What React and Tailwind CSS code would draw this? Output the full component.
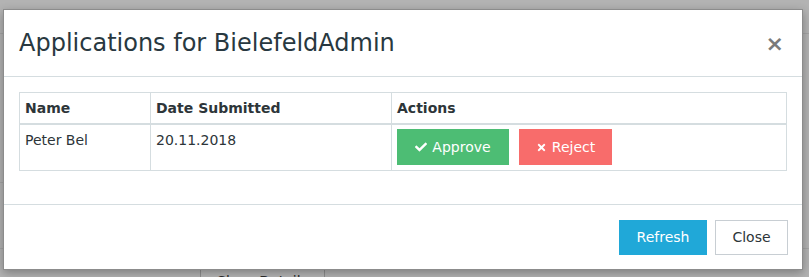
import { FaCheck, FaTimes } from 'react-icons/fa';

const apps = [{ name: 'Peter Bel', date: '20.11.2018' }];

export default function App() {
  return (
    <div className="relative w-[809px] h-[277px] overflow-hidden bg-[#b3b3b3] font-['DejaVu_Sans',sans-serif]">
      {/* page behind the backdrop */}
      <div className="absolute left-0 top-[33px] w-full h-px bg-[#a4a4a4]" />
      <div className="absolute left-0 top-[182px] w-[3px] h-px bg-[#a4a4a4]" />
      <div className="absolute left-0 top-[248px] w-full h-px bg-[#a4a4a4]" />
      <div className="absolute left-[200px] top-[268px] w-[125px] h-[30px] border border-[#8f8f8f] bg-[#b6b6b6] text-[14px] leading-[20px] text-[#2a2a2a] text-center pt-[2px]">
        Show Details
      </div>

      {/* modal */}
      <div className="absolute left-[3px] top-[9px] w-[800px] bg-white border border-[#8c8c8c] shadow-[0_3px_9px_rgba(0,0,0,0.3)]">
        <div className="flex items-center justify-between px-[15px] py-[15px] border-b border-[#d5dde0]">
          <h4 className="text-[24px] leading-[36px] text-[#283840]">Applications for BielefeldAdmin</h4>
          <button className="text-[22px] leading-[20px] font-bold text-[#7a7a7a] mr-[3px] mt-[2px]">×</button>
        </div>

        <div className="px-[15px] pt-[15px] pb-[15px]">
          <table className="w-full border-collapse border border-[#d5dde0] mb-[18px] text-[14px] leading-[20px] text-[#2d3539]">
            <thead>
              <tr>
                <th className="w-[131px] text-left font-bold px-[5px] py-[5px] border border-[#d5dde0] border-b-2">Name</th>
                <th className="w-[241px] text-left font-bold px-[5px] py-[5px] border border-[#d5dde0] border-b-2">Date Submitted</th>
                <th className="text-left font-bold px-[5px] py-[5px] border border-[#d5dde0] border-b-2">Actions</th>
              </tr>
            </thead>
            <tbody>
              {apps.map((a) => (
                <tr key={a.name}>
                  <td className="align-top px-[5px] py-[5px] border border-[#d5dde0]">{a.name}</td>
                  <td className="align-top px-[5px] py-[5px] border border-[#d5dde0]">{a.date}</td>
                  <td className="align-top px-[5px] pt-[4px] pb-[5px] border border-[#d5dde0]">
                    <div className="flex gap-[10px]">
                      <button className="flex items-center gap-[5px] h-[36px] w-[112px] justify-center bg-[#4dbd74] text-white text-[14px]">
                        <FaCheck className="w-[12px] h-[12px]" /> Approve
                      </button>
                      <button className="flex items-center gap-[5px] h-[36px] w-[93px] justify-center bg-[#f86c6b] text-white text-[14px]">
                        <FaTimes className="w-[11px] h-[11px]" /> Reject
                      </button>
                    </div>
                  </td>
                </tr>
              ))}
            </tbody>
          </table>
        </div>

        <div className="flex justify-end gap-[8px] px-[14px] pt-[15px] pb-[14px] border-t border-[#d5dde0]">
          <button className="h-[35px] w-[88px] bg-[#20a8d8] text-white text-[14px]">Refresh</button>
          <button className="h-[35px] w-[73px] bg-white border border-[#c8ced3] text-[#2d3539] text-[14px]">Close</button>
        </div>
      </div>
    </div>
  );
}
